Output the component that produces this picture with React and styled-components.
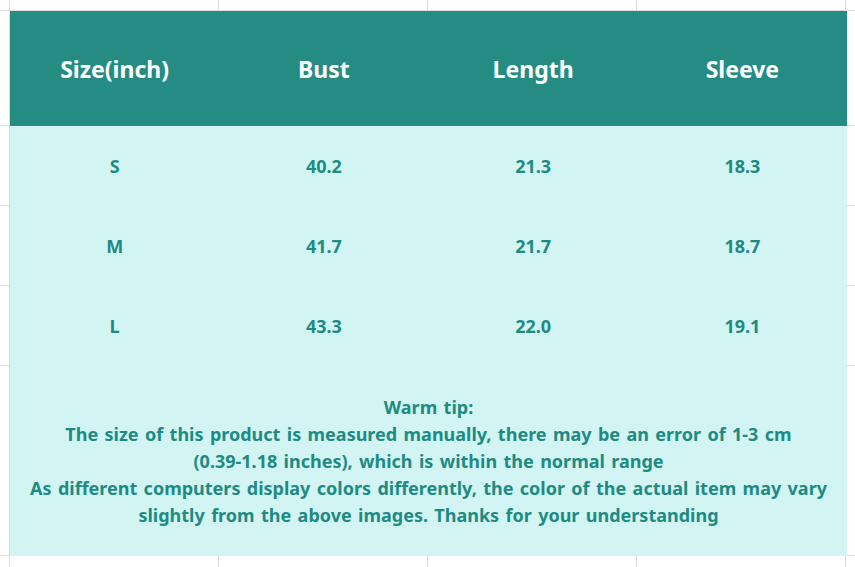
import React from "react";
import styled, { createGlobalStyle } from "styled-components";

const GlobalStyle = createGlobalStyle`
  html, body {
    margin: 0;
    padding: 0;
    background: #ffffff;
  }
  body {
    font-family: "Noto Sans", "Open Sans", sans-serif;
  }
`;

// spreadsheet-like sheet behind the table
const Sheet = styled.div`
  width: 855px;
  height: 567px;
  box-sizing: border-box;
  padding: 11px 8px 11px 10px;
  background-color: #ffffff;
  background-image:
    linear-gradient(#dcdcdc, #dcdcdc),
    linear-gradient(#dcdcdc, #dcdcdc),
    linear-gradient(#dcdcdc, #dcdcdc),
    linear-gradient(#dcdcdc, #dcdcdc),
    linear-gradient(#dcdcdc, #dcdcdc),
    linear-gradient(#dcdcdc, #dcdcdc),
    linear-gradient(to right, #dcdcdc 1px, transparent 1px);
  background-size:
    100% 1px,
    100% 1px,
    100% 1px,
    100% 1px,
    100% 1px,
    100% 1px,
    209px 100%;
  background-position:
    0 10px,
    0 125px,
    0 205px,
    0 285px,
    0 365px,
    0 555px,
    9px 0;
  background-repeat: no-repeat, no-repeat, no-repeat, no-repeat, no-repeat,
    no-repeat, repeat-x;
`;

const Table = styled.div`
  width: 837px;
  display: grid;
  grid-template-columns: repeat(4, 1fr);
  background: #d2f4f2;
`;

const HeadCell = styled.div`
  height: 115px;
  display: flex;
  align-items: center;
  justify-content: center;
  background: #258c84;
  color: #ffffff;
  font-size: 23px;
  font-weight: 700;
  word-spacing: 1px;
`;

const Cell = styled.div`
  height: 80px;
  display: flex;
  align-items: center;
  justify-content: center;
  color: #1e8b83;
  font-size: 18px;
  font-weight: 700;
`;

const Tip = styled.div`
  grid-column: 1 / -1;
  height: 190px;
  box-sizing: border-box;
  display: flex;
  flex-direction: column;
  align-items: center;
  justify-content: center;
  padding: 0 10px;
  color: #1e8b83;
  font-size: 18px;
  font-weight: 700;
  line-height: 27px;
  word-spacing: 1.7px;
  text-align: center;
`;

const headers = ["Size(inch)", "Bust", "Length", "Sleeve"];
const rows = [
  ["S", "40.2", "21.3", "18.3"],
  ["M", "41.7", "21.7", "18.7"],
  ["L", "43.3", "22.0", "19.1"],
];

export default function App() {
  return (
    <>
      <GlobalStyle />
      <Sheet>
        <Table>
          {headers.map((h) => (
            <HeadCell key={h}>{h}</HeadCell>
          ))}
          {rows.map((r) =>
            r.map((v, i) => <Cell key={r[0] + i}>{v}</Cell>)
          )}
          <Tip>
            <div>Warm tip:</div>
            <div>
              The size of this product is measured manually, there may be an
              error of 1-3 cm
              <br />
              (0.39-1.18 inches), which is within the normal range
            </div>
            <div>
              As different computers display colors differently, the color of
              the actual item may vary
              <br />
              slightly from the above images. Thanks for your understanding
            </div>
          </Tip>
        </Table>
      </Sheet>
    </>
  );
}
